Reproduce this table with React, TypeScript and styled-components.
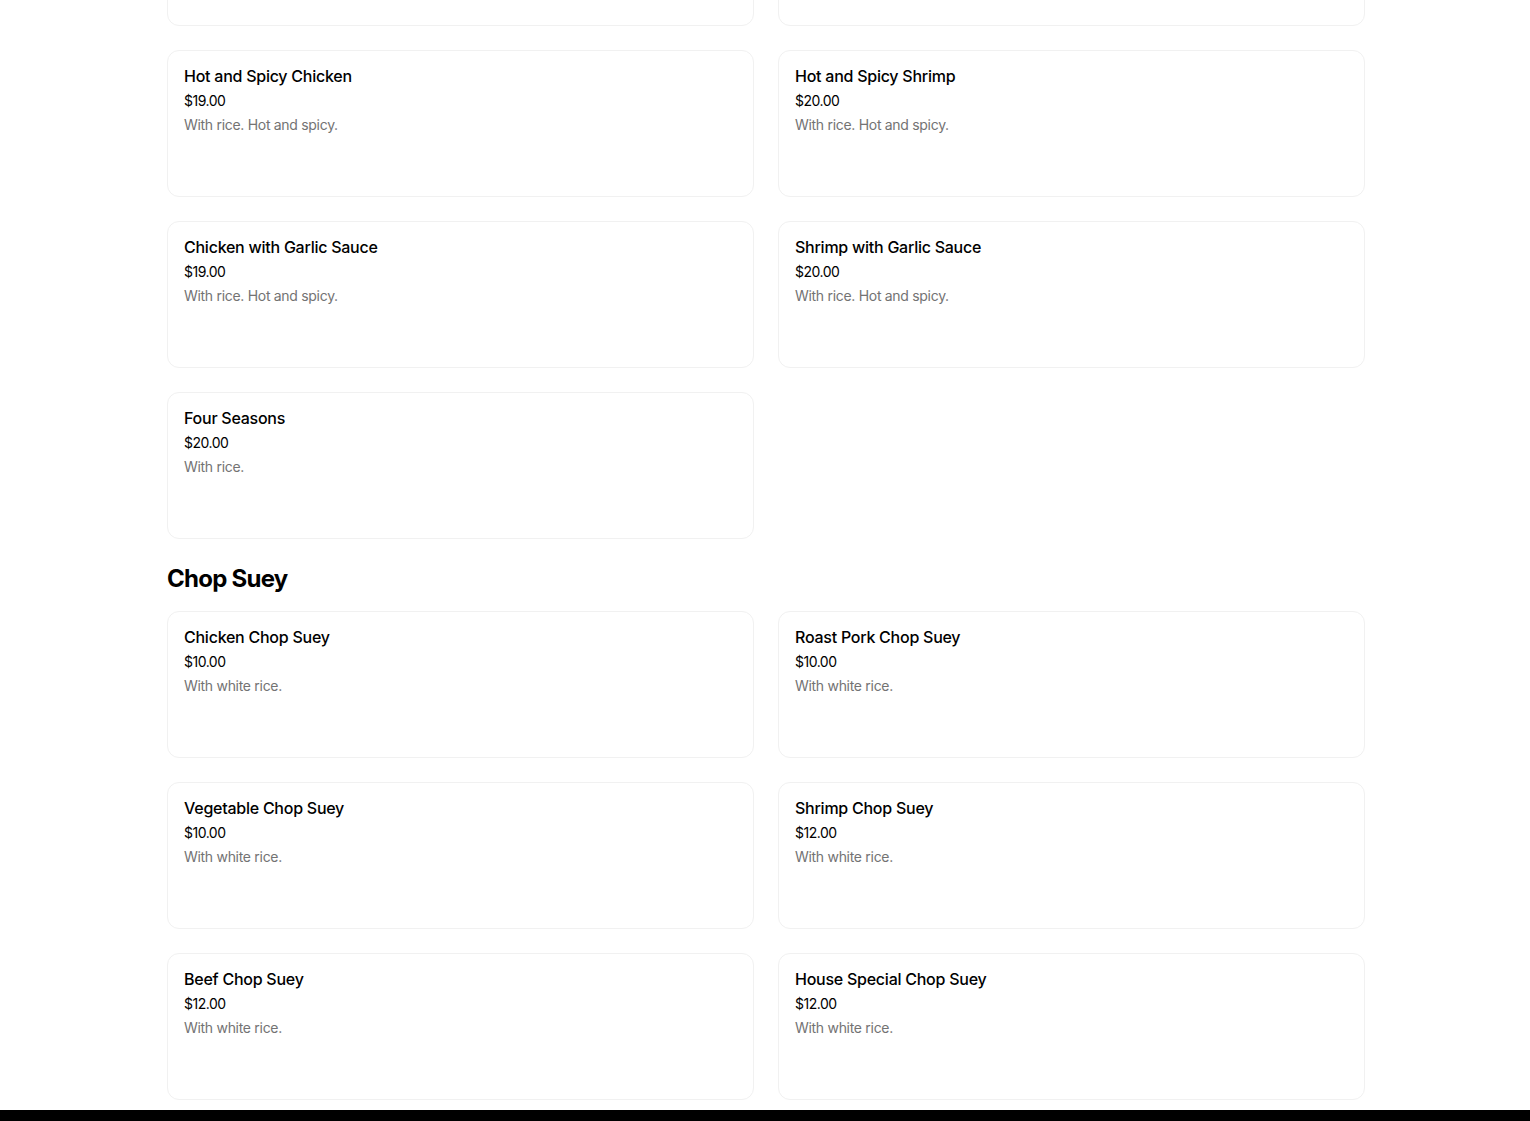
import { styled, createGlobalStyle } from 'styled-components';

type Item = { name: string; price: string; description: string };

const sections: { title?: string; items: Item[] }[] = [
  {
    items: [
      { name: 'Hot and Spicy Chicken', price: '$19.00', description: 'With rice. Hot and spicy.' },
      { name: 'Hot and Spicy Shrimp', price: '$20.00', description: 'With rice. Hot and spicy.' },
      { name: 'Chicken with Garlic Sauce', price: '$19.00', description: 'With rice. Hot and spicy.' },
      { name: 'Shrimp with Garlic Sauce', price: '$20.00', description: 'With rice. Hot and spicy.' },
      { name: 'Four Seasons', price: '$20.00', description: 'With rice.' },
    ],
  },
  {
    title: 'Chop Suey',
    items: [
      { name: 'Chicken Chop Suey', price: '$10.00', description: 'With white rice.' },
      { name: 'Roast Pork Chop Suey', price: '$10.00', description: 'With white rice.' },
      { name: 'Vegetable Chop Suey', price: '$10.00', description: 'With white rice.' },
      { name: 'Shrimp Chop Suey', price: '$12.00', description: 'With white rice.' },
      { name: 'Beef Chop Suey', price: '$12.00', description: 'With white rice.' },
      { name: 'House Special Chop Suey', price: '$12.00', description: 'With white rice.' },
    ],
  },
];

export default function App() {
  return (
    <>
      <GlobalStyle />
      <S.Page>
        {sections.map((section, i) => (
          <S.Section key={i}>
            {section.title && <S.Heading>{section.title}</S.Heading>}
            <S.Grid>
              {/* cards scrolled past the top edge */}
              {i === 0 && (
                <>
                  <S.Card />
                  <S.Card />
                </>
              )}
              {section.items.map((item) => (
                <S.Card key={item.name}>
                  <S.Name>{item.name}</S.Name>
                  <S.Price>{item.price}</S.Price>
                  <S.Description>{item.description}</S.Description>
                </S.Card>
              ))}
            </S.Grid>
          </S.Section>
        ))}
      </S.Page>
      <S.Footer />
    </>
  );
}

const GlobalStyle = createGlobalStyle`
  html, body {
    margin: 0;
    padding: 0;
    background: #ffffff;
    overflow: hidden;
  }
  body {
    font-family: Inter, 'Liberation Sans', sans-serif;
    color: #000000;
  }
`;

const S = {
  Page: styled.main`
    margin: -121px 165px 0 167px;
    padding-bottom: 10px;
  `,
  Section: styled.section`
    & + & {
      margin-top: 24px;
    }
  `,
  Heading: styled.h2`
    margin: 0 0 16px;
    font-size: 24px;
    line-height: 32px;
    font-weight: 700;
    letter-spacing: -0.75px;
    color: #000000;
  `,
  Grid: styled.div`
    display: grid;
    grid-template-columns: 1fr 1fr;
    gap: 24px;
  `,
  Card: styled.div`
    height: 147px;
    box-sizing: border-box;
    padding: 15px 16px;
    border: 1px solid #f1f1f1;
    border-radius: 12px;
    display: flex;
    flex-direction: column;
  `,
  Name: styled.div`
    font-size: 16px;
    line-height: 20px;
    font-weight: 500;
    letter-spacing: -0.25px;
    color: #000000;
  `,
  Price: styled.div`
    margin-top: 5px;
    font-size: 14px;
    line-height: 20px;
    font-weight: 400;
    letter-spacing: -0.5px;
    color: #000000;
  `,
  Description: styled.div`
    margin-top: 4px;
    font-size: 14px;
    line-height: 20px;
    font-weight: 400;
    letter-spacing: -0.3px;
    color: #737373;
  `,
  Footer: styled.footer`
    height: 200px;
    background: #000000;
  `,
};
